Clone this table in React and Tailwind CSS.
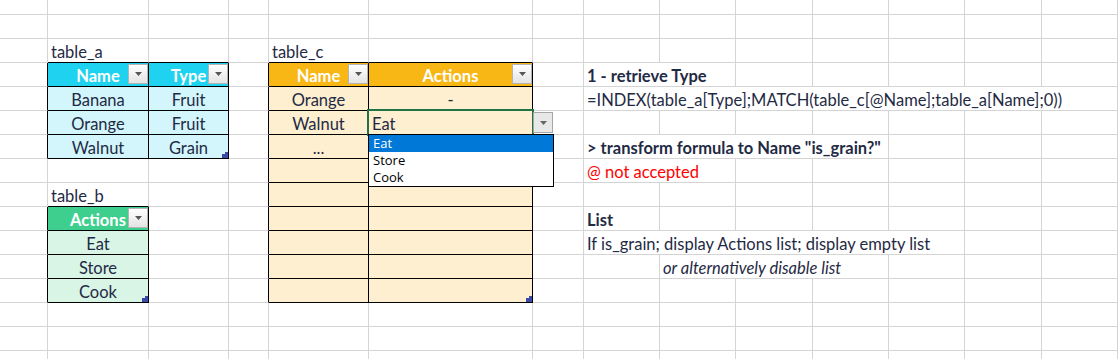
import React from "react";

// table areas on the sheet, as (col, row) ranges; first row is the header
const tables = [
  { c0: 1, c1: 2, r0: 3, r1: 6, head: "bg-[#1fd3f0]", body: "bg-[#d3f6fc]" }, // table_a
  { c0: 1, c1: 1, r0: 9, r1: 12, head: "bg-[#3ecf8e]", body: "bg-[#d9f5e6]" }, // table_b
  { c0: 4, c1: 5, r0: 3, r1: 12, head: "bg-[#f9b715]", body: "bg-[#fdefcf]" }, // table_c
];

const tableAt = (c, r) =>
  tables.find((t) => c >= t.c0 && c <= t.c1 && r >= t.r0 && r <= t.r1);

const cells = {
  "1,2": { text: "table_a", kind: "label" },
  "1,3": { text: "Name", kind: "head" },
  "2,3": { text: "Type", kind: "head" },
  "1,4": { text: "Banana", kind: "body" },
  "2,4": { text: "Fruit", kind: "body" },
  "1,5": { text: "Orange", kind: "body" },
  "2,5": { text: "Fruit", kind: "body" },
  "1,6": { text: "Walnut", kind: "body" },
  "2,6": { text: "Grain", kind: "body", handle: true },

  "1,8": { text: "table_b", kind: "label" },
  "1,9": { text: "Actions", kind: "head" },
  "1,10": { text: "Eat", kind: "body" },
  "1,11": { text: "Store", kind: "body" },
  "1,12": { text: "Cook", kind: "body", handle: true },

  "4,2": { text: "table_c", kind: "label" },
  "4,3": { text: "Name", kind: "head" },
  "5,3": { text: "Actions", kind: "head" },
  "4,4": { text: "Orange", kind: "body" },
  "5,4": { text: "-", kind: "body" },
  "4,5": { text: "Walnut", kind: "body" },
  "5,5": { text: "Eat", kind: "label", selected: true },
  "4,6": { text: "...", kind: "body" },
  "5,12": { kind: "body", handle: true },

  "7,3": { text: "1 - retrieve Type", kind: "label", span: 2, bold: true },
  "7,4": {
    text: "=INDEX(table_a[Type];MATCH(table_c[@Name];table_a[Name];0))",
    kind: "label",
    span: 7,
  },
  "7,6": { text: '> transform formula to Name "is_grain?"', kind: "label", span: 4, bold: true },
  "7,7": { text: "@ not accepted", kind: "label", span: 2, red: true },
  "7,9": { text: "List", kind: "label", bold: true },
  "7,10": { text: "If is_grain; display Actions list; display empty list", kind: "label", span: 5 },
  "8,11": { text: "or alternatively disable list", kind: "label", span: 3, italic: true },
};

const spanClass = { 1: "", 2: "col-span-2", 3: "col-span-3", 4: "col-span-4", 5: "col-span-5", 7: "col-span-7" };

const Arrow = ({ color = "#555" }) => (
  <svg width="7" height="4" viewBox="0 0 7 4">
    <polygon points="0,0 7,0 3.5,4" fill={color} />
  </svg>
);

// all children of a cell share one grid area, so the button and handle sit over the text
const FilterButton = () => (
  <div className="col-start-1 row-start-1 self-start justify-self-end mt-[1px] w-[20px] h-[20px] border border-[#b4b4b4] bg-linear-to-b from-white to-[#e4e4e4] flex items-center justify-center">
    <Arrow />
  </div>
);

const ResizeHandle = () => (
  <svg className="col-start-1 row-start-1 self-end justify-self-end" width="6" height="6" viewBox="0 0 6 6">
    <polygon points="3,0 6,0 6,6 0,6 0,2 3,2" fill="#3b4aa6" />
  </svg>
);

const ListPopup = () => (
  <>
    <div className="absolute z-10 left-full ml-[1px] top-[1px] w-[20px] h-[21px] border border-[#a6a6a6] bg-[#e8e8e8] flex items-center justify-center">
      <Arrow color="#666" />
    </div>
    <div className="absolute z-10 -left-[1px] top-[23px] w-[186px] border border-black bg-white font-['Open_Sans',sans-serif] text-[13px] text-black">
      <div className="h-[17px] leading-[17px] pl-[4px] bg-[#0078d7] text-white">Eat</div>
      <div className="h-[17px] leading-[17px] pl-[4px]">Store</div>
      <div className="h-[17px] leading-[17px] pl-[4px]">Cook</div>
    </div>
  </>
);

function Cell({ c, r, span, text, kind, handle, selected, bold, italic, red }) {
  const t = tableAt(c, r);
  const right = t || tableAt(c + span, r) ? "border-r-black" : "border-r-[#d4d4d4]";
  const bottom = t || tableAt(c, r + 1) ? "border-b-black" : "border-b-[#d4d4d4]";
  const fill = t ? (r === t.r0 ? t.head : t.body) : "bg-white";
  const isHead = kind === "head";
  const centered = kind === "head" || kind === "body";

  return (
    <div
      className={`relative grid grid-cols-[minmax(0,1fr)] grid-rows-[minmax(0,1fr)] min-w-0 border-r border-b ${right} ${bottom} ${fill} ${spanClass[span]}`}
    >
      {text && (
        <span
          className={`col-start-1 row-start-1 self-end whitespace-nowrap leading-[20px] ${
            centered ? "justify-self-center" : "justify-self-start pl-[3px]"
          } ${isHead ? "font-bold text-white" : red ? "text-[#ff0000]" : "text-[#1f2a44]"} ${
            bold ? "font-bold" : ""
          } ${italic ? "italic" : ""}`}
        >
          {text}
        </span>
      )}
      {isHead && <FilterButton />}
      {handle && <ResizeHandle />}
      {selected && (
        <>
          <div className="absolute z-10 -left-[2px] -top-[2px] -right-[2px] -bottom-[2px] border-2 border-[#217346]" />
          <ListPopup />
        </>
      )}
    </div>
  );
}

export default function App() {
  const rows = [];
  for (let r = 0; r < 16; r++) {
    for (let c = 0; c < 14; ) {
      const cell = cells[`${c},${r}`] || {};
      const span = cell.span || 1;
      rows.push(<Cell key={`${c}-${r}`} c={c} r={r} span={span} {...cell} />);
      c += span;
    }
  }

  return (
    <div className="w-[1118px] h-[359px] overflow-hidden bg-white font-['Lato',sans-serif] text-[16.5px]">
      <div className="grid grid-cols-[48px_101px_80px_40px_100px_164px_51px_76px_76px_77px_76px_76px_77px_76px] grid-rows-[15px_repeat(14,24px)_24px]">
        {rows}
      </div>
    </div>
  );
}
